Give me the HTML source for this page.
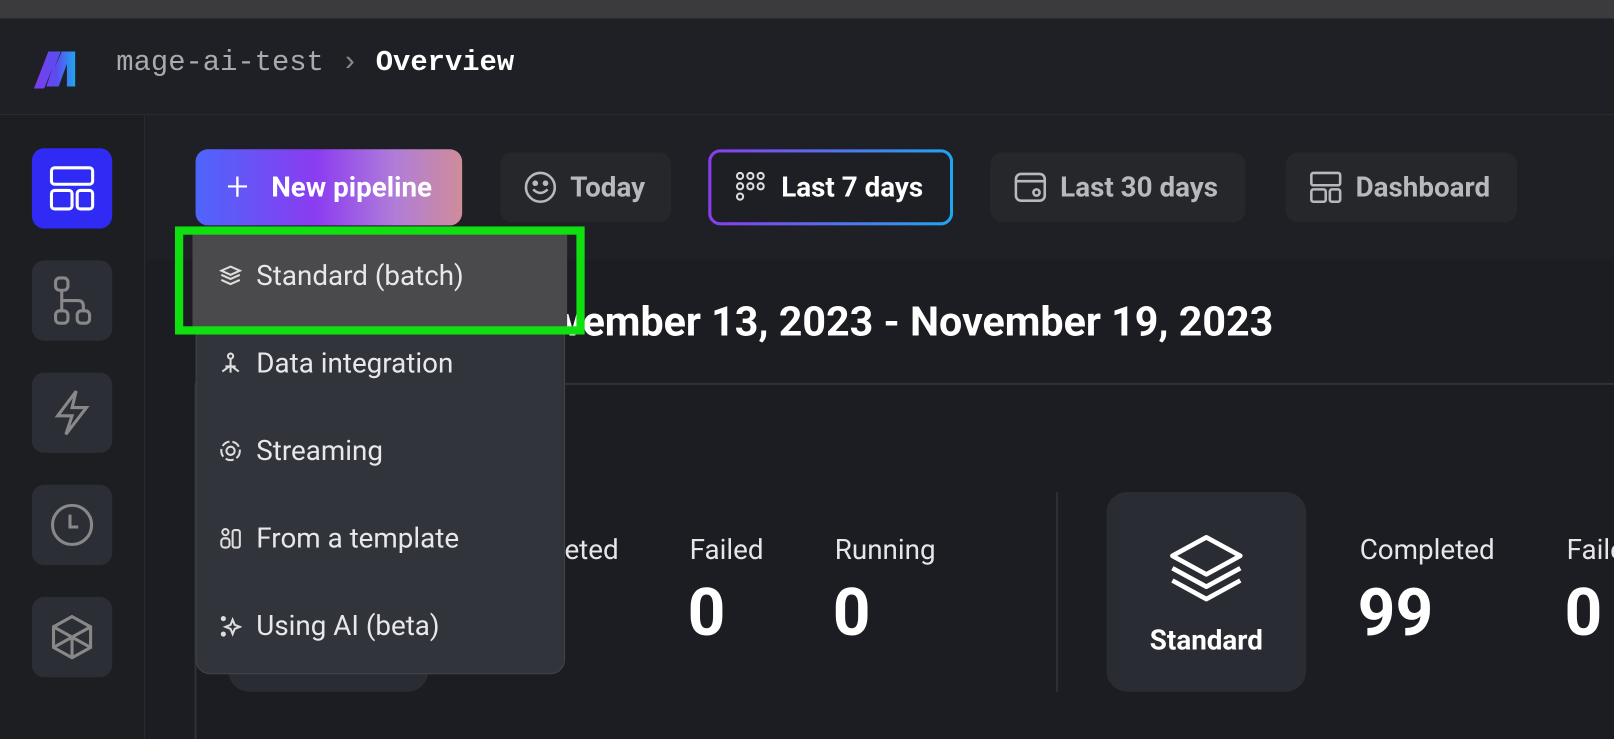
<!DOCTYPE html>
<html><head><meta charset="utf-8"><style>
*{box-sizing:border-box;margin:0;padding:0}
html,body{width:1614px;height:718px;overflow:hidden;background:#1c1d22}
#w{position:absolute;left:0;top:0;width:1568px;height:698px;transform:scale(1.0293);transform-origin:0 0;font-family:"Roboto","Liberation Sans",sans-serif;color:#fff}
.abs{position:absolute}
.top{left:0;top:0;width:1568px;height:18px;background:#3b3b3d}
.hdr{left:0;top:18px;width:1568px;height:94px;background:#1f2025;border-bottom:1px solid #2c2d33}
.side{left:0;top:112px;width:141px;height:606px;background:#1d1e22;border-right:1px solid #2a2b30}
.sb{position:absolute;left:31px;width:78px;height:78px;border-radius:12px;background:#2c2e35;display:flex;align-items:center;justify-content:center}
.btn{position:absolute;top:148px;height:68px;border-radius:12px;background:#26272b;display:flex;align-items:center;font-weight:bold;font-size:27px;color:#b8b9bd;padding-left:22px;gap:12px;white-space:nowrap}
.dd{left:190px;top:225px;width:359px;height:430px;background:#32343c;border-radius:14px;border:1px solid #41434b}
.it{position:absolute;left:22px;font-size:27px;color:#e8e8ea;display:flex;align-items:center;gap:14px;white-space:nowrap}
.lab{font-size:27px;color:#e6e6e8}
.num{font-size:64px;font-weight:bold}
</style></head><body><div id="w">
<div class="abs top"></div>
<div class="abs hdr">
 <svg class="abs" style="left:33px;top:30px" width="50" height="40" viewBox="0 0 50 40"><defs><linearGradient id="lg" x1="0" x2="1"><stop offset="0" stop-color="#7b3cf0"/><stop offset="0.55" stop-color="#5b4cf0"/><stop offset="1" stop-color="#1fa6f0"/></linearGradient></defs><path d="M0 38 L14 2 L26 2 L20 18 L27 2 L40 2 L40 36 L32 36 L32 14 L24 36 L12 36 L18 18 L10 38Z" fill="url(#lg)"/></svg>
 <div class="abs" style="left:113px;top:28px;font-family:'Liberation Mono',monospace;font-size:28px;color:#a9aaae;white-space:nowrap">mage-ai-test <span style="color:#888">›</span> <b style="color:#fff">Overview</b></div>
</div>
<div class="abs side">
 <div class="sb" style="top:32px;background:#2f2bf5"><svg width="46" height="46" viewBox="0 0 46 46" fill="none" stroke="#fff" stroke-width="3"><rect x="3" y="3" width="40" height="16" rx="3"/><rect x="3" y="25" width="20" height="18" rx="3"/><rect x="28" y="25" width="15" height="18" rx="3"/></svg></div>
 <div class="sb" style="top:141px"><svg width="44" height="50" viewBox="0 0 44 50" fill="none" stroke="#888" stroke-width="3"><rect x="6" y="3" width="12" height="12" rx="4"/><rect x="6" y="35" width="12" height="12" rx="4"/><rect x="27" y="35" width="12" height="12" rx="4"/><path d="M12 15V35M12 25h16q5 0 5 6v4"/></svg></div>
 <div class="sb" style="top:250px"><svg width="40" height="50" viewBox="0 0 40 50" fill="none" stroke="#888" stroke-width="3"><path d="M24 4L6 28h14l-6 18 20-26H20z"/></svg></div>
 <div class="sb" style="top:359px"><svg width="44" height="44" viewBox="0 0 44 44" fill="none" stroke="#888" stroke-width="3"><circle cx="22" cy="22" r="19"/><path d="M20 12v12h8"/></svg></div>
 <div class="sb" style="top:468px"><svg width="44" height="46" viewBox="0 0 44 46" fill="none" stroke="#888" stroke-width="3"><path d="M22 3L40 13V33L22 43L4 33V13Z M4 13L22 23L40 13 M22 23V43 M4 33L22 23L40 33"/></svg></div>
</div>
<div class="abs" style="left:142px;top:112px;width:1430px;height:140px;background:#1f2025"></div>
<div class="btn" style="left:190px;width:259px;top:145px;height:74px;background:linear-gradient(90deg,#4d65fb 0%,#8a3cf0 45%,#b07dd8 75%,#cf8c9a 100%);color:#fff;padding-left:30px;gap:22px"><span style="font-size:38px;font-weight:300;line-height:1">+</span>New pipeline</div>
<div class="btn" style="left:486px;width:166px"><svg width="34" height="34" viewBox="0 0 34 34" fill="none" stroke="#b8b9bd" stroke-width="2.5"><circle cx="17" cy="17" r="14"/><circle cx="12" cy="13" r="1.5" fill="#b8b9bd"/><circle cx="22" cy="13" r="1.5" fill="#b8b9bd"/><path d="M10 19q7 7 14 0"/></svg>Today</div>
<div class="btn" style="left:688px;width:238px;top:145px;height:74px;background:linear-gradient(#1e1f24,#1e1f24) padding-box,linear-gradient(90deg,#8a3cf0,#1fa6f0) border-box;border:3px solid transparent;color:#fff;padding-left:22px"><svg width="34" height="34" viewBox="0 0 34 34" fill="none" stroke="#ddd" stroke-width="2"><circle cx="6" cy="6" r="3"/><circle cx="16" cy="6" r="3"/><circle cx="26" cy="6" r="3"/><circle cx="6" cy="16" r="3"/><circle cx="16" cy="16" r="3"/><circle cx="26" cy="16" r="3"/><circle cx="6" cy="26" r="3"/></svg>Last 7 days</div>
<div class="btn" style="left:962px;width:248px"><svg width="34" height="34" viewBox="0 0 34 34" fill="none" stroke="#b8b9bd" stroke-width="2.5"><rect x="3" y="4" width="28" height="26" rx="5"/><path d="M3 11h28"/><circle cx="23" cy="22" r="3"/></svg>Last 30 days</div>
<div class="btn" style="left:1249px;width:225px"><svg width="34" height="34" viewBox="0 0 34 34" fill="none" stroke="#b8b9bd" stroke-width="2.5"><rect x="3" y="3" width="28" height="12" rx="2"/><rect x="3" y="19" width="14" height="12" rx="2"/><rect x="21" y="19" width="10" height="12" rx="2"/></svg>Dashboard</div>

<div class="abs" style="right:331px;top:289px;font-size:40px;font-weight:bold;white-space:nowrap">November 13, 2023 - November 19, 2023</div>
<div class="abs" style="left:190px;top:372px;width:1400px;height:2px;background:#303137"></div>
<div class="abs" style="left:189px;top:372px;width:2px;height:346px;background:#303137"></div>
<div class="abs" style="left:222px;top:480px;width:194px;height:192px;border-radius:20px;background:#2a2c33"></div>
<div class="abs lab" style="left:470px;top:518px">Completed</div>
<div class="abs lab" style="left:670px;top:518px">Failed</div><div class="abs num" style="left:668px;top:558px">0</div>
<div class="abs lab" style="left:811px;top:518px">Running</div><div class="abs num" style="left:809px;top:558px">0</div>
<div class="abs" style="left:1026px;top:478px;width:2px;height:194px;background:#2e2f35"></div>
<div class="abs" style="left:1075px;top:478px;width:194px;height:194px;border-radius:20px;background:#2a2c33">
 <svg class="abs" style="left:58px;top:38px" width="78" height="72" viewBox="0 0 78 72" fill="none" stroke="#fff" stroke-width="4.5" stroke-linejoin="round"><path d="M39 6L72 24L39 42L6 24Z"/><path d="M6 36L39 54L72 36"/><path d="M6 48L39 66L72 48"/></svg>
 <div class="abs" style="left:0;width:194px;top:128px;text-align:center;font-size:27px;font-weight:bold">Standard</div>
</div>
<div class="abs lab" style="left:1321px;top:518px">Completed</div><div class="abs num" style="left:1319px;top:558px">99</div>
<div class="abs lab" style="left:1522px;top:518px">Failed</div><div class="abs num" style="left:1520px;top:558px">0</div>

<div class="abs dd">
 <div class="abs" style="left:-4px;top:-2px;width:364px;height:96px;background:#4a4a4c"></div>
 <div class="it" style="top:26px"><svg width="22" height="22" viewBox="0 0 22 22" fill="none" stroke="#ddd" stroke-width="2"><path d="M11 2L20 6L11 10L2 6Z M2 10L11 14L20 10 M2 15L11 19L20 15"/></svg>Standard (batch)</div>
 <div class="it" style="top:111px"><svg width="22" height="22" viewBox="0 0 22 22" fill="none" stroke="#ddd" stroke-width="2"><circle cx="11" cy="4" r="2.5"/><path d="M11 7V20M11 13L3 19M11 13L19 19M6 14h10"/></svg>Data integration</div>
 <div class="it" style="top:196px"><svg width="22" height="22" viewBox="0 0 22 22" fill="none" stroke="#ddd" stroke-width="2"><circle cx="11" cy="11" r="9" stroke-dasharray="8 3"/><circle cx="11" cy="11" r="4"/></svg>Streaming</div>
 <div class="it" style="top:281px"><svg width="22" height="22" viewBox="0 0 22 22" fill="none" stroke="#ddd" stroke-width="2"><circle cx="6" cy="5" r="3"/><rect x="2" y="11" width="8" height="9" rx="3"/><rect x="13" y="3" width="7" height="17" rx="2"/></svg>From a template</div>
 <div class="it" style="top:366px"><svg width="22" height="22" viewBox="0 0 22 22" fill="none" stroke="#ddd" stroke-width="2"><path d="M13 5L15 10L20 12L15 14L13 19L11 14L6 12L11 10Z"/><circle cx="4" cy="4" r="1.5" fill="#ddd"/><circle cx="4" cy="19" r="1.5" fill="#ddd"/></svg>Using AI (beta)</div>
</div>
<div class="abs" style="left:170px;top:220px;width:398px;height:105px;border:8px solid #10e010"></div>
</div></body></html>
